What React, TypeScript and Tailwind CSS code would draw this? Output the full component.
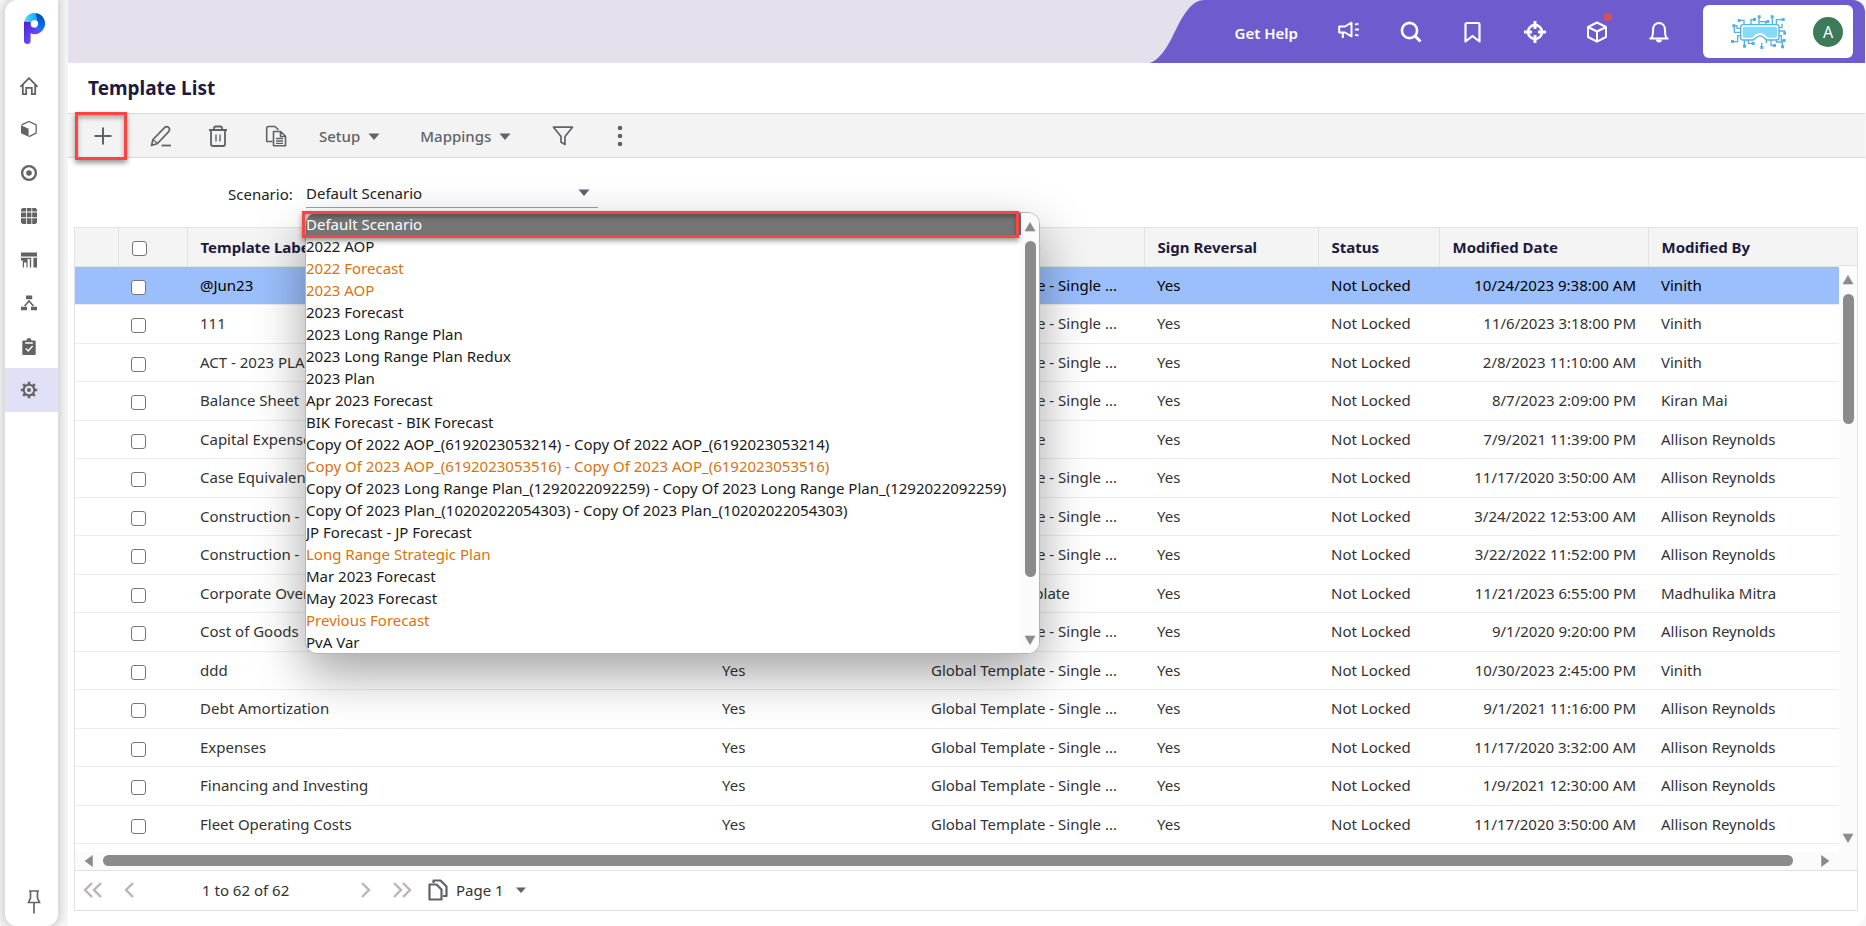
import { useState } from 'react';
import type { ReactNode } from 'react';

type Row = { label: string; type: string; date: string; by: string };

const SINGLE = 'Global Template - Single ...';

const rows: Row[] = [
    { label: '@Jun23', type: SINGLE, date: '10/24/2023 9:38:00 AM', by: 'Vinith' },
    { label: '111', type: SINGLE, date: '11/6/2023 3:18:00 PM', by: 'Vinith' },
    { label: 'ACT - 2023 PLAN', type: SINGLE, date: '2/8/2023 11:10:00 AM', by: 'Vinith' },
    { label: 'Balance Sheet', type: SINGLE, date: '8/7/2023 2:09:00 PM', by: 'Kiran Mai' },
    { label: 'Capital Expense', type: 'Global Template', date: '7/9/2021 11:39:00 PM', by: 'Allison Reynolds' },
    { label: 'Case Equivalents', type: SINGLE, date: '11/17/2020 3:50:00 AM', by: 'Allison Reynolds' },
    { label: 'Construction -', type: SINGLE, date: '3/24/2022 12:53:00 AM', by: 'Allison Reynolds' },
    { label: 'Construction -', type: SINGLE, date: '3/22/2022 11:52:00 PM', by: 'Allison Reynolds' },
    { label: 'Corporate Overhead', type: 'Allocation Template', date: '11/21/2023 6:55:00 PM', by: 'Madhulika Mitra' },
    { label: 'Cost of Goods', type: SINGLE, date: '9/1/2020 9:20:00 PM', by: 'Allison Reynolds' },
    { label: 'ddd', type: SINGLE, date: '10/30/2023 2:45:00 PM', by: 'Vinith' },
    { label: 'Debt Amortization', type: SINGLE, date: '9/1/2021 11:16:00 PM', by: 'Allison Reynolds' },
    { label: 'Expenses', type: SINGLE, date: '11/17/2020 3:32:00 AM', by: 'Allison Reynolds' },
    { label: 'Financing and Investing', type: SINGLE, date: '1/9/2021 12:30:00 AM', by: 'Allison Reynolds' },
    { label: 'Fleet Operating Costs', type: SINGLE, date: '11/17/2020 3:50:00 AM', by: 'Allison Reynolds' },
];

const scenarios = [
    { name: 'Default Scenario' },
    { name: '2022 AOP' },
    { name: '2022 Forecast', locked: true },
    { name: '2023 AOP', locked: true },
    { name: '2023 Forecast' },
    { name: '2023 Long Range Plan' },
    { name: '2023 Long Range Plan Redux' },
    { name: '2023 Plan' },
    { name: 'Apr 2023 Forecast' },
    { name: 'BIK Forecast - BIK Forecast' },
    { name: 'Copy Of 2022 AOP_(6192023053214) - Copy Of 2022 AOP_(6192023053214)' },
    { name: 'Copy Of 2023 AOP_(6192023053516) - Copy Of 2023 AOP_(6192023053516)', locked: true },
    { name: 'Copy Of 2023 Long Range Plan_(1292022092259) - Copy Of 2023 Long Range Plan_(1292022092259)' },
    { name: 'Copy Of 2023 Plan_(10202022054303) - Copy Of 2023 Plan_(10202022054303)' },
    { name: 'JP Forecast - JP Forecast' },
    { name: 'Long Range Strategic Plan', locked: true },
    { name: 'Mar 2023 Forecast' },
    { name: 'May 2023 Forecast' },
    { name: 'Previous Forecast', locked: true },
    { name: 'PvA Var' },
];

const Caret = ({ className = '' }: { className?: string }) => (
    <svg width="12" height="7" viewBox="0 0 12 7" className={className} aria-hidden="true">
        <path d="M0.5 0.5h11L6 7z" fill="currentColor" />
    </svg>
);

const Arrow = ({ dir }: { dir: 'up' | 'down' | 'left' | 'right' }) => {
    const d = {
        up: 'M6 1.5 11 10H1z',
        down: 'M6 10.5 11 2H1z',
        left: 'M2 6 9.5 0.5v11z',
        right: 'M10 6 2.5 0.5v11z',
    }[dir];
    return (
        <svg width="12" height="12" viewBox="0 0 12 12" className="shrink-0 text-[#8b8b8b]" aria-hidden="true">
            <path d={d} fill="currentColor" stroke="currentColor" strokeWidth="0.6" strokeLinejoin="round" />
        </svg>
    );
};

/* Sidebar icons, 18px box */
const navIcons: { name: string; icon: ReactNode }[] = [
    {
        name: 'Home',
        icon: (
            <g fill="none" stroke="currentColor" strokeWidth="1.8">
                <path d="M0.4 9.8 9 1.2l8.6 8.6" />
                <path d="M2.8 8v9.200h3.400v-6.400h5.600v6.400h3.400V8" />
            </g>
        ),
    },
    {
        name: 'Models',
        icon: (
            <g>
                <path d="M1 5.2 8.6 8.8v8L1 13.2z" fill="currentColor" />
                <path d="M1.6 4.9 9 1.4l7.2 3.5v8.2L9 16.6" fill="none" stroke="currentColor" strokeWidth="1.3" />
            </g>
        ),
    },
    {
        name: 'Dashboard',
        icon: (
            <g>
                <circle cx="9" cy="9" r="6.9" fill="none" stroke="currentColor" strokeWidth="2.3" />
                <circle cx="9" cy="9" r="2.8" fill="currentColor" />
            </g>
        ),
    },
    {
        name: 'Spreadsheets',
        icon: (
            <path
                fill="currentColor"
                d="M2.5 1H6v3.6H1V2.5zM6.8 1h4.6v3.6H6.8zM12.2 1h3.4L17 2.5v2.1h-4.8zM1 5.6h5v4.6H1zM6.8 5.6h4.6v4.6H6.8zM12.2 5.6H17v4.6h-4.8zM1 11.2h5V17H2.5L1 15.6zM6.8 11.2h4.6V17H6.8zM12.2 11.2H17v4.4L15.6 17h-3.4z"
            />
        ),
    },
    {
        name: 'Reports',
        icon: <path fill="currentColor" d="M1 1.5h16v4H1zM1 6.700h10.200v9.800H9.800V8H7.600v8.500H6.400v-5H4v5H2.800V9.500H1zM13.400 6.700H17v9.800h-3.600z" />,
    },
    {
        name: 'Workflow',
        icon: (
            <g>
                <path fill="currentColor" d="M6 1.6h6.2v3.6H6zM1 12.8h6v3.4H1zM11 12.8h6v3.4h-6z" />
                <path d="M4.6 12 9 7l4.4 5" fill="none" stroke="currentColor" strokeWidth="1.6" />
            </g>
        ),
    },
    {
        name: 'Tasks',
        icon: (
            <g>
                <path fill="currentColor" d="M3.5 2.5h3a2.5 2.5 0 0 1 5 0h3c.7 0 1.2.5 1.2 1.2v12c0 .7-.5 1.3-1.2 1.3h-11c-.7 0-1.2-.6-1.2-1.3v-12c0-.7.5-1.2 1.2-1.2z" />
                <path d="M5.2 5h7.6M5.8 10.6l2.4 2.4 4.4-5" fill="none" stroke="#fff" strokeWidth="1.4" />
            </g>
        ),
    },
    {
        name: 'Settings',
        icon: (
            <g fill="none" stroke="currentColor">
                <circle cx="9" cy="9" r="5.3" strokeWidth="2" />
                <circle cx="9" cy="9" r="2" fill="currentColor" stroke="none" />
                <path
                    strokeWidth="2.6"
                    d="M9 0.800v2.500M9 14.700v2.500M0.800 9h2.500M14.700 9h2.500M3.200 3.200l1.800 1.800M13 13l1.800 1.800M3.200 14.800l1.800-1.800M13 5l1.800-1.800"
                />
            </g>
        ),
    },
];

function Logo() {
    return (
        <svg width="21" height="31" viewBox="0 0 21 31" aria-label="Planful" role="img">
            <defs>
                <linearGradient id="stem" x1="0" y1="0" x2="1" y2="1">
                    <stop offset="0" stopColor="#4a22c8" />
                    <stop offset="0.6" stopColor="#6a45ff" />
                    <stop offset="1" stopColor="#4f2be0" />
                </linearGradient>
                <linearGradient id="sky" x1="0" y1="0" x2="1" y2="0">
                    <stop offset="0" stopColor="#4be3f2" />
                    <stop offset="1" stopColor="#12a5ff" />
                </linearGradient>
                <linearGradient id="deep" x1="0" y1="0" x2="0" y2="1">
                    <stop offset="0" stopColor="#0049b8" />
                    <stop offset="1" stopColor="#0a78ff" />
                </linearGradient>
            </defs>
            <path d="M0 8.5h6.8v4.2c1 1.5 3 2.2 4.5 1.8l7 3A10.5 10.5 0 0 1 6.6 20.3V28c0 1.8-1.2 3-3.2 3S0 29.8 0 28z" fill="url(#stem)" />
            <path d="M0 9A10.5 10.5 0 0 1 11.5 0L13 7.8A4 4 0 0 0 6.8 9.8C4.5 7 1.5 7.5 0 9z" fill="url(#sky)" />
            <path d="M11.5 0A10.5 10.5 0 0 1 18.3 17.5C15.5 17.8 13.5 16.5 12 14.2A4 4 0 0 0 13 7.8z" fill="url(#deep)" />
        </svg>
    );
}

function VrLogo() {
    return (
        <svg width="55" height="34" viewBox="0 0 165 102" aria-hidden="true">
            <g fill="none" stroke="#55b0e6" strokeWidth="4">
                <path d="M26 16h13v14M60 30V14h12M84 30V6M84 20h26M124 30V6M136 30V14h20M104 30V20" />
                <path d="M30 40H18v-8H8M30 52H10V36M30 62H20v18H6" />
                <path d="M143 38h10V26M143 48h18v8M143 62h8v14h10" />
                <path d="M40 73v20M52 73v12h14M92 98V84M106 73v12M120 73v18h10M136 73v8h18v14" />
            </g>
            <g fill="#55b0e6">
                <path d="M20 12h9v9h-9zM66 9h9v9h-9zM80 1h9v9h-9zM106 15h9v9h-9zM119 1h9v9h-9zM152 9h9v9h-9zM4 28h9v9H4zM0 75h9v9H0zM157 50h9v9h-9zM155 72h9v9h-9z" />
                <path d="M36 89h9v9h-9zM62 81h9v9h-9zM88 93h9v9h-9zM126 87h9v9h-9zM150 91h9v9h-9z" />
            </g>
            <path
                d="M36 29h101q7 0 7 7v32q0 7-7 7h-29c-6 0-10-13-21-13s-15 13-21 13H36q-7 0-7-7V36q0-7 7-7z"
                fill="#fff"
                stroke="#55b0e6"
                strokeWidth="4"
            />
            <path d="M40 35h93q5 0 5 5v23q0 5-5 5h-20c-7 0-11-14-26-14S68 68 61 68H40q-5 0-5-5V40q0-5 5-5z" fill="#86dafa" />
        </svg>
    );
}

function Sidebar() {
    return (
        <aside className="flex w-[53px] shrink-0 flex-col items-center rounded-l-xl rounded-br-xl bg-white shadow-[0_0_8px_3px_rgba(0,0,0,0.16)]">
            <a href="#" className="mt-[13px] mb-5 ml-1.5">
                <Logo />
            </a>
            <nav className="flex w-full flex-col">
                {navIcons.map(({ name, icon }) => (
                    <a
                        key={name}
                        href="#"
                        aria-label={name}
                        className={`flex items-center justify-center pr-1.5 text-[#636363] odd:h-[43px] even:h-11 ${name === 'Settings' ? 'bg-[#e0e0f6]' : ''}`}
                    >
                        <svg width="18" height="18" viewBox="0 0 18 18">
                            {icon}
                        </svg>
                    </a>
                ))}
            </nav>
            <button aria-label="Pin menu" className="mt-auto mb-3 ml-1 text-[#666]">
                <svg width="14" height="24" viewBox="0 0 14 24" fill="none" stroke="currentColor" strokeWidth="1.7">
                    <path d="M2 1h10M3.5 1v7L1.5 12.5h11L10.5 8V1M7 12.5V23.5" />
                </svg>
            </button>
        </aside>
    );
}

function TopBar() {
    return (
        <header className="flex h-[63px] justify-end rounded-tr-xl bg-[#e5e0ec]">
            <svg width="55" height="63" viewBox="0 0 55 63" className="text-[#6e5ccf]" aria-hidden="true">
                <path d="M0 63C18 56 24 28 36 12 42 4 47 0 55 0v63z" fill="currentColor" />
            </svg>
            <div className="flex items-center rounded-tr-xl bg-[#6e5ccf] pr-3 text-white">
                <a href="#" className="mt-1 ml-[30px] text-[15px] font-semibold">
                    Get Help
                </a>
                <div className="mx-10 flex items-center gap-10">
                    <button aria-label="Announcements">
                        <svg width="22" height="22" viewBox="0 0 22 22" fill="none" stroke="currentColor" strokeWidth="2" strokeLinejoin="round">
                            <path d="M1.2 5.5H7l6.5-3.8v13.6L7 11.5H1.2z" />
                            <path d="M4.8 11.5v5.500M17 3.6l3.5-1M17 8.6h4M17 13.6l3.5 1" />
                        </svg>
                    </button>
                    <button aria-label="Search">
                        <svg width="22" height="22" viewBox="0 0 22 22" fill="none" stroke="currentColor" strokeWidth="2.6">
                            <circle cx="9.5" cy="9.5" r="7.6" />
                            <path d="m15 15 5.500 5.500" strokeWidth="3" />
                        </svg>
                    </button>
                    <button aria-label="Bookmarks">
                        <svg width="22" height="22" viewBox="0 0 22 22" fill="none" stroke="currentColor" strokeWidth="2.2" strokeLinejoin="round">
                            <path d="M3.5 20.5V3.5q0-1.5 1.5-1.5h11q1.5 0 1.5 1.5v17L10.5 15z" />
                        </svg>
                    </button>
                    <button aria-label="Locate">
                        <svg width="22" height="22" viewBox="0 0 22 22" fill="none" stroke="currentColor" strokeWidth="2.6">
                            <circle cx="11" cy="11" r="7" />
                            <path d="M11 0v8M11 14v8M0 11h8M14 11h8" strokeWidth="3" />
                        </svg>
                    </button>
                    <button aria-label="Packages" className="relative">
                        <svg width="22" height="22" viewBox="0 0 22 22" fill="none" stroke="currentColor" strokeWidth="2" strokeLinejoin="round">
                            <path d="M11 1.5 20 6v10l-9 4.7L2 16V6zM2 6l9 4.5L20 6M11 10.5v10" />
                        </svg>
                        <span className="absolute -top-2 -right-1 size-2 rounded-full bg-[#dc5050]" />
                    </button>
                    <button aria-label="Notifications">
                        <svg width="22" height="22" viewBox="0 0 22 22" fill="none" stroke="currentColor" strokeWidth="2">
                            <path d="M1.5 17.5h19M3.5 17c1.5-2 1.5-4 1.5-8 0-4 2.5-7 6-7s6 3 6 7c0 4 0 6 1.5 8" />
                            <path d="M8 18.5a3 3 0 0 0 6 0z" fill="currentColor" stroke="none" />
                        </svg>
                    </button>
                </div>
                <div className="-ml-[7px] flex h-[53px] w-[150px] items-center justify-between rounded-md bg-white pr-[10px] pl-7">
                    <VrLogo />
                    <button className="size-[30px] rounded-full bg-[#3c7a5a] text-base text-white">A</button>
                </div>
            </div>
        </header>
    );
}

function Toolbar() {
    return (
        <div className="flex h-[45px] items-center border-t border-b border-[#d9d9d9] bg-[#f3f3f3] pl-[7px] text-[#5f6368]">
            <button
                aria-label="Add"
                className="flex h-12 w-[52px] items-center justify-center border-3 border-[#ff4343] pl-1 shadow-[0_3px_5px_rgba(0,0,0,0.4),inset_0_3px_5px_rgba(0,0,0,0.3)]"
            >
                <svg width="18" height="18" viewBox="0 0 18 18" fill="none" stroke="currentColor" strokeWidth="2">
                    <path d="M9 0.5v17M0.5 9h17" />
                </svg>
            </button>
            <button aria-label="Edit" className="ml-[23px]">
                <svg width="22" height="22" viewBox="0 0 22 22" fill="none" stroke="currentColor" strokeWidth="1.7" strokeLinejoin="round">
                    <path d="M1.500 20.500 3 14.500 14.500 2.600q2-2 4-.2t.2 4.200L7.500 18.500z" />
                    <path d="M3 14.500l4.500 4" strokeWidth="1.200" />
                    <path d="M11.5 20.500h9.500" strokeWidth="1.800" />
                </svg>
            </button>
            <button aria-label="Delete" className="ml-[35px]">
                <svg width="22" height="22" viewBox="0 0 22 22" fill="none" stroke="currentColor" strokeWidth="1.8">
                    <path d="M2 5h18M7 5V3.2Q7 1.5 8.7 1.5h4.6q1.7 0 1.7 1.7V5M4 5v14q0 2 2 2h10q2 0 2-2V5" />
                    <path d="M9 9.5v7M13 9.5v7" strokeWidth="1.4" />
                </svg>
            </button>
            <button aria-label="Copy" className="ml-9">
                <svg width="22" height="22" viewBox="0 0 22 22" fill="none" stroke="currentColor" strokeWidth="1.6" strokeLinejoin="round">
                    <path d="M7.5 16.5H1.700v-13Q1.700 1.500 3.500 1.500H10l3.500 3.500" />
                    <path d="M8.5 6.5h7.2l4.8 4.8v9.5h-12zM15.5 6.5v5h5" />
                    <path d="M11 13.5h7M11 16h7M11 18.4h7" strokeWidth="1.3" />
                </svg>
            </button>
            <button className="ml-8 flex items-center gap-2 pt-0.5 text-[15px] font-medium">
                Setup <Caret />
            </button>
            <button className="ml-10 flex items-center gap-2 pt-0.5 text-[15px] font-medium">
                Mappings <Caret />
            </button>
            <button aria-label="Filter" className="ml-[41px]">
                <svg width="22" height="20" viewBox="0 0 22 20" fill="none" stroke="currentColor" strokeWidth="1.7" strokeLinejoin="round">
                    <path d="M1.5 1.2h19L13 10.5v8l-4-2.500v-5.500z" />
                </svg>
            </button>
            <button aria-label="More" className="ml-[43px]">
                <svg width="6" height="22" viewBox="0 0 6 22" fill="currentColor">
                    <circle cx="3" cy="3" r="2.3" />
                    <circle cx="3" cy="11" r="2.3" />
                    <circle cx="3" cy="19" r="2.3" />
                </svg>
            </button>
        </div>
    );
}

function ScenarioPicker() {
    const [scenario, setScenario] = useState('Default Scenario');

    return (
        <div className="relative flex h-[69px] items-start pt-6 pl-[160px] text-[15px] text-[#222]">
            <label htmlFor="scenario" className="w-[78px] leading-6">
                Scenario:
            </label>
            <div className="relative w-[292px] border-b border-[#7ba2ea]">
                <select
                    id="scenario"
                    value={scenario}
                    onChange={(e) => setScenario(e.target.value)}
                    className="block h-[25px] w-full appearance-none bg-transparent pb-1 outline-none"
                >
                    {scenarios.map((s) => (
                        <option key={s.name}>{s.name}</option>
                    ))}
                </select>
                <Caret className="pointer-events-none absolute top-[7px] right-2 text-[#5f6368]" />

                {/* Open list, floats over the grid */}
                <div className="absolute top-[30px] -left-px z-10 flex h-[442px] overflow-hidden rounded-xl border border-[#b5b5b5] bg-white shadow-[0_20px_50px_rgba(0,0,0,0.36)]">
                    <ul role="listbox" aria-label="Scenario" className="w-[715px]">
                        {scenarios.map((s) => (
                            <li
                                key={s.name}
                                role="option"
                                aria-selected={s.name === scenario}
                                onClick={() => setScenario(s.name)}
                                className={`h-[22px] leading-[22px] whitespace-nowrap ${
                                    s.name === scenario ? 'bg-[#757575] text-white' : s.locked ? 'text-[#d9730d]' : 'text-[#1a1a1a]'
                                }`}
                            >
                                {s.name}
                            </li>
                        ))}
                    </ul>
                    <div className="flex w-[18px] flex-col items-center justify-between bg-[#fbfbfb] pt-2 pb-[7px]">
                        <Arrow dir="up" />
                        <div className="mt-2 mb-auto h-[336px] w-[11px] rounded-full bg-[#8b8b8b]" />
                        <Arrow dir="down" />
                    </div>
                </div>
                <div className="pointer-events-none absolute top-[29px] -left-1 z-20 h-[27px] w-[717px] border-3 border-[#ff4343] shadow-[0_3px_5px_rgba(0,0,0,0.4),inset_0_3px_5px_rgba(0,0,0,0.3)]" />
            </div>
        </div>
    );
}

const Check = ({ label }: { label: string }) => (
    <input
        type="checkbox"
        aria-label={label}
        className="mt-1 block size-[15px] appearance-none rounded-[3px] border border-[#767676] bg-white checked:bg-[#6e5ccf]"
    />
);

function TemplateGrid() {
    return (
        <div className="flex">
            <div className="min-w-0 flex-1">
                <table className="w-full table-fixed border-collapse text-left text-[15px]">
                    <colgroup>
                        <col className="w-[43px]" />
                        <col className="w-[69px]" />
                        <col />
                        <col className="w-[209px]" />
                        <col className="w-[226px]" />
                        <col className="w-[174px]" />
                        <col className="w-[121px]" />
                        <col className="w-[209px]" />
                        <col className="w-[191px]" />
                    </colgroup>
                    <thead>
                        <tr className="h-[38px] border-b border-[#e2e2e2] bg-[#f4f4f4] text-[#1c1b3e] [&>th]:pr-3 [&>th]:pl-[13px] [&>th+th]:border-l [&>th+th]:border-[#e2e2e2]">
                            <th />
                            <th>
                                <Check label="Select all" />
                            </th>
                            <th>Template Label</th>
                            <th>Active</th>
                            <th>Template Type</th>
                            <th>Sign Reversal</th>
                            <th>Status</th>
                            <th>Modified Date</th>
                            <th>Modified By</th>
                        </tr>
                    </thead>
                    <tbody>
                        {rows.map((r, i) => (
                            <tr
                                key={i}
                                className={`border-b border-[#ececec] odd:h-[38px] even:h-[39px] [&>td]:pr-3 [&>td]:pl-[13px] ${
                                    i === 0 ? 'bg-[#9bbffd] text-black' : 'text-[#333]'
                                }`}
                            >
                                <td />
                                <td>
                                    <Check label={`Select ${r.label}`} />
                                </td>
                                <td>{r.label}</td>
                                <td>Yes</td>
                                <td>{r.type}</td>
                                <td>Yes</td>
                                <td>Not Locked</td>
                                <td className="text-right whitespace-nowrap">{r.date}</td>
                                <td>{r.by}</td>
                            </tr>
                        ))}
                    </tbody>
                </table>
                <div className="mt-2 flex h-[18px] items-center bg-[#fbfbfb] px-2">
                    <Arrow dir="left" />
                    <div className="mr-[26px] ml-2 h-[11px] flex-1 rounded-full bg-[#8b8b8b]" />
                    <Arrow dir="right" />
                </div>
            </div>
            <div className="flex w-[18px] flex-col bg-[#fbfbfb]">
                <div className="h-[38px] border-b border-[#e2e2e2] bg-[#f4f4f4]" />
                <div className="flex flex-1 flex-col items-center pt-2 pb-[26px]">
                    <Arrow dir="up" />
                    <div className="mt-2 mb-auto h-[130px] w-[11px] rounded-full bg-[#8b8b8b]" />
                    <Arrow dir="down" />
                </div>
            </div>
        </div>
    );
}

const Chevrons = ({ d, label, w }: { d: string; label: string; w: number }) => (
    <button aria-label={label}>
        <svg width={w} height="16" viewBox={`0 0 ${w} 16`} fill="none" stroke="#b9b5b5" strokeWidth="2.4">
            <path d={d} />
        </svg>
    </button>
);

function Pager() {
    return (
        <div className="flex h-10 items-center border-t border-[#e2e2e2] pl-2 text-[15px] text-[#333]">
            <Chevrons label="First page" w={20} d="M9 1 2 8l7 7M18 1l-7 7 7 7" />
            <div className="w-5" />
            <Chevrons label="Previous page" w={12} d="M10 1 3 8l7 7" />
            <span className="w-[225px] pl-[67px]">1 to 62 of 62</span>
            <Chevrons label="Next page" w={12} d="m2 1 7 7-7 7" />
            <div className="w-5" />
            <Chevrons label="Last page" w={20} d="m2 1 7 7-7 7M11 1l7 7-7 7" />
            <button className="ml-4 flex items-center text-[#333]">
                <svg width="20" height="22" viewBox="0 0 20 22" fill="none" stroke="#5f6368" strokeWidth="2.2" strokeLinejoin="round" className="mr-2">
                    <path d="M1.5 5.5h7l5 5v10h-12z" />
                    <path d="M5.5 4V1.500h7l6 6v9.500H15" />
                </svg>
                Page 1
                <svg width="10" height="6" viewBox="0 0 10 6" className="ml-3">
                    <path d="M0 0.5h10L5 6z" fill="#5f6368" />
                </svg>
            </button>
        </div>
    );
}

export default function App() {
    return (
        <div className="flex min-h-screen bg-[#f7f7f7] pr-px pl-[5px] font-['Noto_Sans','Open_Sans',sans-serif]">
            <Sidebar />
            <main className="relative ml-[10px] min-w-0 flex-1 rounded-r-xl bg-white">
                <TopBar />
                <h1 className="flex h-[50px] items-center pl-5 text-[19px] font-bold text-[#1c1b3e]">Template List</h1>
                <Toolbar />
                <ScenarioPicker />
                <section className="mr-[7px] ml-[6px] border border-[#e2e2e2]">
                    <TemplateGrid />
                    <Pager />
                </section>
            </main>
        </div>
    );
}
